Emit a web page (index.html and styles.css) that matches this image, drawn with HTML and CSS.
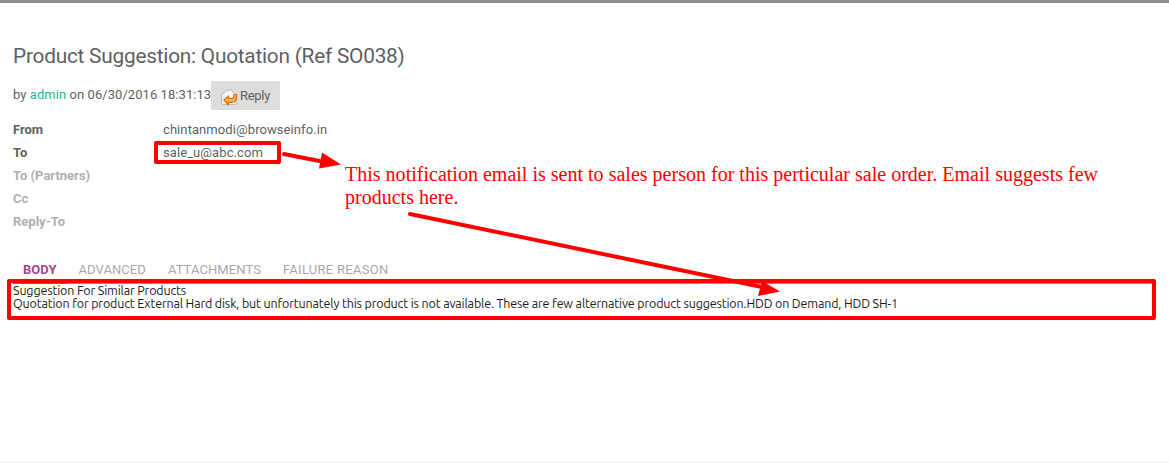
FILE: index.html
```html
<!DOCTYPE html>
<html lang="en">
<head>
<meta charset="utf-8">
<title>Product Suggestion: Quotation (Ref SO038)</title>
<link rel="stylesheet" href="styles.css">
</head>
<body>
<main class="message">
  <h1 class="title"><span>Product Suggestion: Quotation (Ref SO038)</span></h1>
  <div class="byline">
    <span class="author">by <a class="link">admin</a> on 06/30/2016 18:31:13</span>
    <button class="reply">
      <svg class="reply-icon" width="18" height="18" viewBox="0 0 18 18">
        <path d="M1.500 6.500 4.500 4.500 6 2.500Q9 .5 12 2.500L13.500 4.500 16.500 6.500V15.500q0 1-1 1H2.500q-1 0-1-1z" fill="#eee" stroke="#bbb"/>
        <path d="M5 4h8v5H5z" fill="#f8f8f8"/>
        <path d="M4 12 8.500 8v2.500h3q2.500 0 2.500-4h2.500v3q0 4.800-5 4.800h-3V17z" fill="#ffb65c" stroke="#e86c00" stroke-width="1.200" stroke-linejoin="round"/>
      </svg>
      <span>Reply</span>
    </button>
  </div>
  <dl class="fields">
    <dt>From</dt><dd>chintanmodi@browseinfo.in</dd>
    <dt>To</dt><dd>sale_u@abc.com</dd>
    <dt class="empty">To (Partners)</dt><dd></dd>
    <dt class="empty">Cc</dt><dd></dd>
    <dt class="empty">Reply-To</dt><dd></dd>
  </dl>
  <nav class="tabs">
    <span class="tab active">BODY</span>
    <span class="tab">ADVANCED</span>
    <span class="tab">ATTACHMENTS</span>
    <span class="tab reason">FAILURE REASON</span>
  </nav>
  <section class="body">
    <div>Suggestion For Similar Products</div>
    <div>Quotation for product External Hard disk, but unfortunately this product is not available. These are few alternative product suggestion.HDD on Demand, HDD SH-1</div>
  </section>
</main>
<svg class="marks" width="1169" height="463" viewBox="0 0 1169 463">
  <path d="M13 283.500H67" stroke="#a24689"/>
  <g fill="none" stroke="#f00" stroke-width="4" stroke-linejoin="round" stroke-linecap="round">
    <rect x="156" y="143" width="123" height="19"/>
    <rect x="9" y="281" width="1145" height="37"/>
    <path d="M284 154 322 161.500M410 214 762 287"/>
  </g>
  <path d="M322 152.500 341 164.500 319 168.500zM762 281 780 291.500 758 296z" fill="#f00"/>
</svg>
<p class="note">This notification email is sent to sales person for this perticular sale order. Email suggests few<br>products here.</p>
</body>
</html>
```
FILE: styles.css
```css
* { box-sizing: border-box; }
body {
  margin: 0;
  height: 463px;
  overflow: hidden;
  position: relative;
  border-top: 3px solid #8f8f8f;
  border-bottom: 1px solid #ebebeb;
  background: #fff;
  color: #5f5f5f;
  font: 13px/23px Roboto, sans-serif;
}
.message { padding: 38px 13px 0; }
.title { margin: 0; font-size: 20.8px; line-height: 30px; font-weight: 400; letter-spacing: -0.22px; }
.byline { display: flex; height: 29px; margin-top: 10px; }
.author { width: 198px; line-height: 28px; letter-spacing: 0.06px; white-space: nowrap; }
.link { color: #21b799; }
.reply {
  display: flex;
  align-items: center;
  gap: 2px;
  width: 69px;
  height: 29px;
  padding: 0 0 0 9px;
  border: 0;
  background: #ddd;
  color: #5f5f5f;
  font: 13px Roboto, sans-serif;
  letter-spacing: -0.3px;
}
.reply-icon { margin-top: 3px; }
.fields { display: grid; grid-template-columns: 150px 1fr; grid-auto-rows: 23px; margin: 8px 0 0; }
dt { font-weight: 700; }
dd { margin: 0; letter-spacing: 0.08px; }
.empty { color: #afafaf; }
.tabs { display: flex; gap: 22px; height: 26px; margin-top: 25px; padding-left: 10px; line-height: 23px; border-bottom: 1px solid #8f8f8f; color: #a8a8a8; }
.tab { white-space: nowrap; letter-spacing: 0.08px; }
.reason { letter-spacing: 0.28px; }
.active { color: #a24689; font-weight: 700; letter-spacing: 0; }
.body { color: #1a1a1a; font: 12.5px/13px Ubuntu, "Noto Sans", sans-serif; letter-spacing: -0.157px; white-space: nowrap; }
.marks { position: absolute; left: 0; top: -3px; }
.note { position: absolute; left: 345px; top: 160px; margin: 0; color: #f00; font: 20px/23px "Liberation Serif", serif; letter-spacing: 0.01px; white-space: nowrap; }
```
